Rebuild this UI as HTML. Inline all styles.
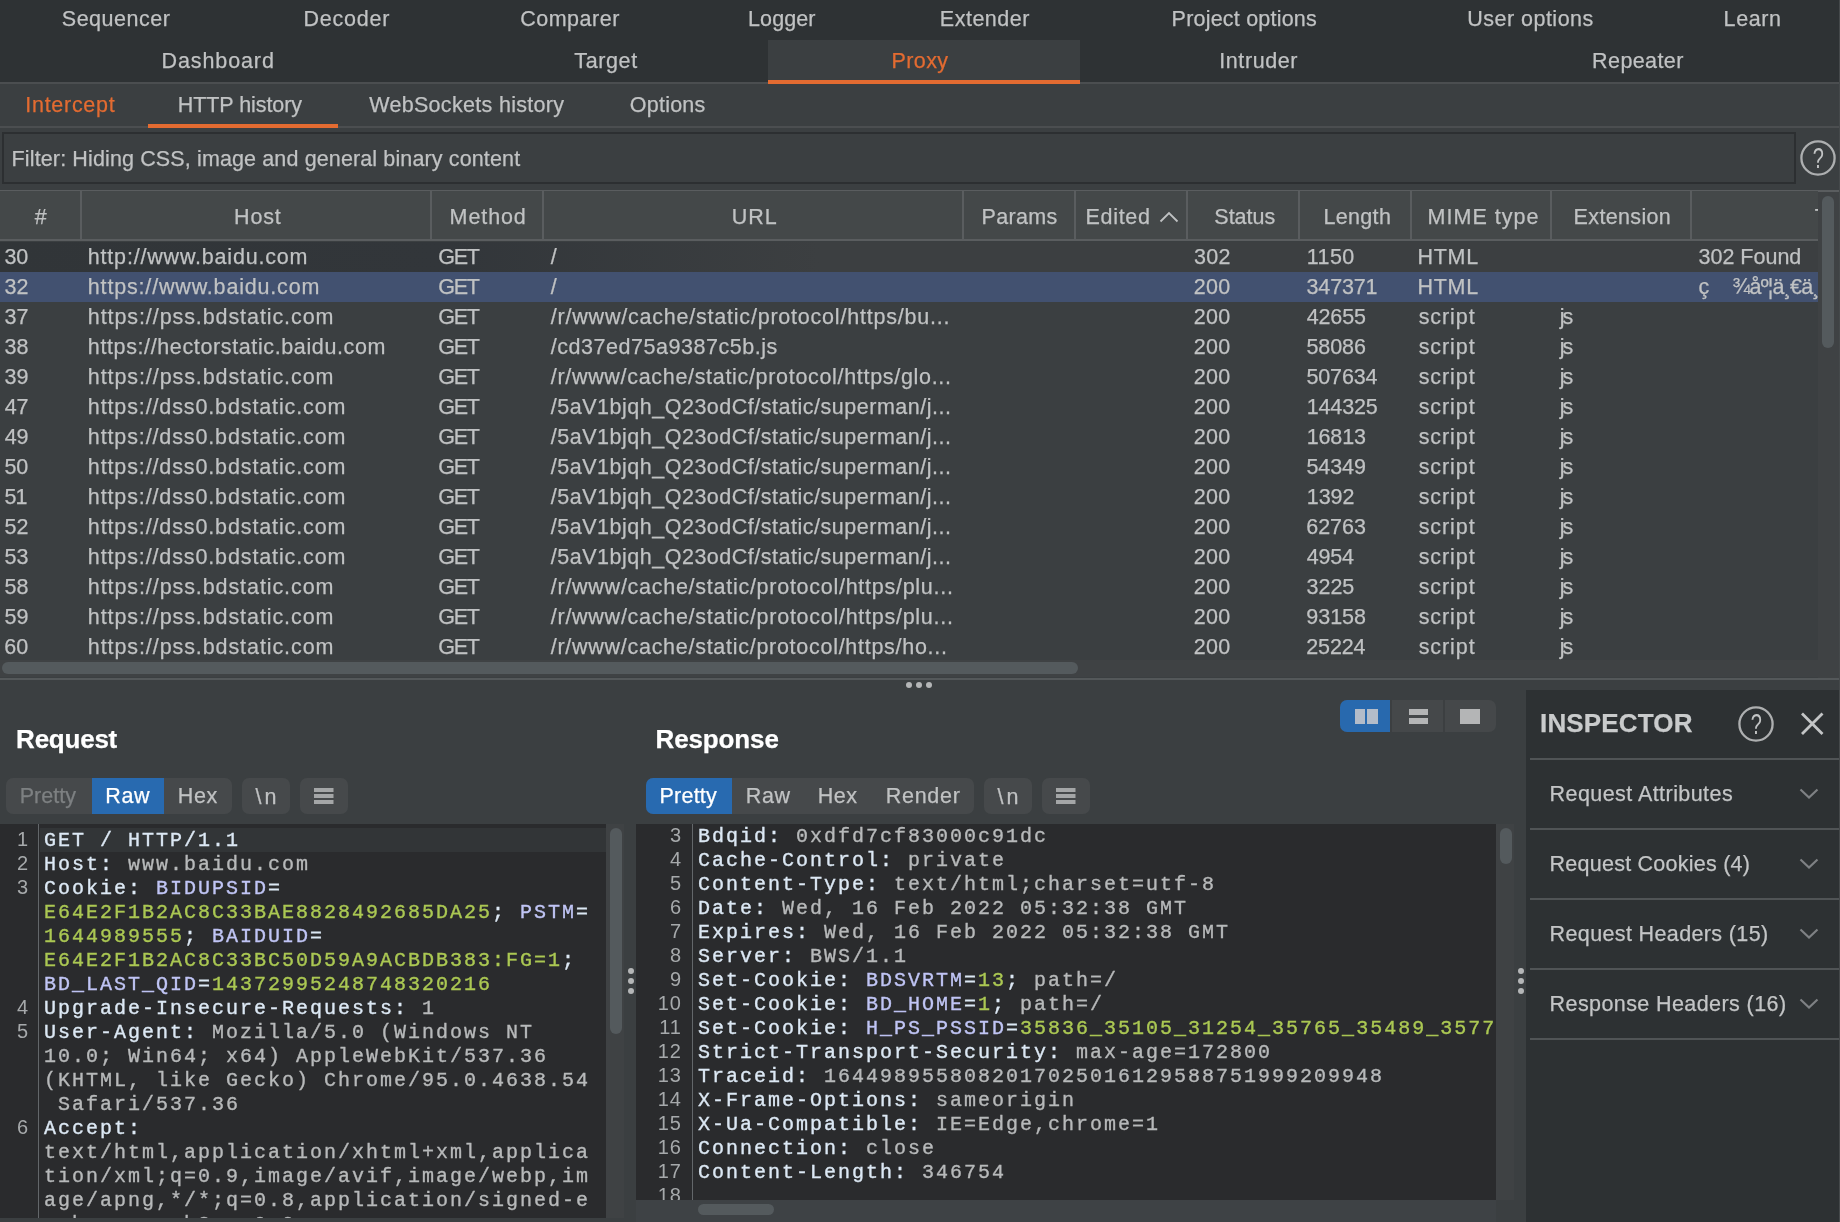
<!DOCTYPE html><html><head><meta charset="utf-8"><title>Burp Suite</title><style>
*{box-sizing:border-box;margin:0;padding:0}
html,body{width:1840px;height:1222px;overflow:hidden;background:#3b3f41}
body{font-family:"Liberation Sans",sans-serif;color:#bbbdbe;position:relative}
.abs{position:absolute}
.t{position:absolute;white-space:pre;line-height:1;color:#c0c2c3;-webkit-text-stroke:0.25px}
#top{left:0;top:0;width:1840px;height:82px;background:#2e3234}
#proxy{left:768px;top:40px;width:312px;height:44px;background:#3b3f41;border-bottom:4px solid #e36b31}
#filter{left:2px;top:132px;width:1794px;height:52px;border:2px solid #2c2f31;background:#3b3f41}
#thead{left:0;top:191px;width:1818px;height:50px;background:#444849;border-bottom:2px solid #5a5d5f;overflow:hidden}
.vl{position:absolute;top:0;width:2px;height:48px;background:#5a5d5f}
.row{position:absolute;left:0;width:1818px;height:30px;overflow:hidden}
.sel{background:#425170}
.mono{font-family:"Liberation Mono",monospace;font-size:20px;letter-spacing:2px;white-space:pre;line-height:24px;-webkit-text-stroke:0.35px}
.ed{position:absolute;background:#2a2b2d;overflow:hidden}
.ln{position:absolute;left:0;color:#a6a9ab;text-align:right;font-family:"Liberation Sans",sans-serif;font-size:20px;letter-spacing:1px;line-height:24px;white-space:pre}
.h{color:#dce8f4}
.v{color:#b7b9ba}
.n{color:#c0c5f5}
.g{color:#abc853}
.grp{position:absolute;top:778px;height:36px;background:#46494b;border-radius:7px;overflow:hidden}
.selb{position:absolute;top:0;height:36px;background:#286ab0}
.ins{position:absolute;left:1530px;width:310px;height:2px;background:#505456}
</style></head><body><div id="root" style="position:absolute;left:0;top:0;width:1840px;height:1222px;will-change:transform">
<div id="top" class="abs"></div>
<div id="proxy" class="abs"></div>
<div class="t" style="left:61.80px;top:7px;font-size:21.5px;line-height:24px;letter-spacing:0.513px;">Sequencer</div>
<div class="t" style="left:303.60px;top:7px;font-size:21.5px;line-height:24px;letter-spacing:0.750px;">Decoder</div>
<div class="t" style="left:520.20px;top:7px;font-size:21.5px;line-height:24px;letter-spacing:0.514px;">Comparer</div>
<div class="t" style="left:748.10px;top:7px;font-size:21.5px;line-height:24px;letter-spacing:0.060px;">Logger</div>
<div class="t" style="left:939.85px;top:7px;font-size:21.5px;line-height:24px;letter-spacing:0.493px;">Extender</div>
<div class="t" style="left:1171.60px;top:7px;font-size:21.5px;line-height:24px;letter-spacing:0.207px;">Project options</div>
<div class="t" style="left:1467.20px;top:7px;font-size:21.5px;line-height:24px;letter-spacing:0.491px;">User options</div>
<div class="t" style="left:1723.60px;top:7px;font-size:21.5px;line-height:24px;letter-spacing:0.575px;">Learn</div>
<div class="t" style="left:161.60px;top:49px;font-size:21.5px;line-height:24px;letter-spacing:0.887px;">Dashboard</div>
<div class="t" style="left:574.30px;top:49px;font-size:21.5px;line-height:24px;letter-spacing:0.620px;">Target</div>
<div class="t" style="left:891.60px;top:49px;font-size:21.5px;line-height:24px;letter-spacing:0.375px;color:#e36b31;">Proxy</div>
<div class="t" style="left:1219.30px;top:49px;font-size:21.5px;line-height:24px;letter-spacing:0.571px;">Intruder</div>
<div class="t" style="left:1592.10px;top:49px;font-size:21.5px;line-height:24px;letter-spacing:0.400px;">Repeater</div>
<div class="abs" style="left:0;top:82px;width:768px;height:2px;background:#4b4e50"></div>
<div class="abs" style="left:1080px;top:82px;width:760px;height:2px;background:#4b4e50"></div>
<div class="abs" style="left:0;top:126px;width:1840px;height:2px;background:#4b4e50"></div>
<div class="abs" style="left:148px;top:124px;width:190px;height:4px;background:#e36b31"></div>
<div class="t" style="left:25.30px;top:93px;font-size:21.5px;line-height:24px;letter-spacing:0.713px;color:#e36b31;">Intercept</div>
<div class="t" style="left:177.80px;top:93px;font-size:21.5px;line-height:24px;letter-spacing:-0.073px;">HTTP history</div>
<div class="t" style="left:369.20px;top:93px;font-size:21.5px;line-height:24px;letter-spacing:0.312px;">WebSockets history</div>
<div class="t" style="left:629.80px;top:93px;font-size:21.5px;line-height:24px;letter-spacing:0.233px;">Options</div>
<div id="filter" class="abs"></div>
<div class="t" style="left:11.60px;top:147px;font-size:21.5px;line-height:24px;letter-spacing:0.129px;">Filter: Hiding CSS, image and general binary content</div>
<svg class="abs" style="left:1798px;top:138px" width="40" height="40" viewBox="0 0 40 40"><circle cx="20" cy="20" r="16.6" fill="none" stroke="#adafb0" stroke-width="2.3"/><text transform="translate(20.3,29.6) scale(0.74,1.12)" x="0" y="0" font-family="Liberation Sans, sans-serif" font-size="27" fill="#c2c4c5" text-anchor="middle">?</text></svg>
<div class="abs" style="left:0;top:190px;width:1840px;height:2px;background:#5a5d5f"></div>
<div id="thead" class="abs">
<div class="vl" style="left:80px"></div>
<div class="vl" style="left:430px"></div>
<div class="vl" style="left:542px"></div>
<div class="vl" style="left:962px"></div>
<div class="vl" style="left:1074px"></div>
<div class="vl" style="left:1186px"></div>
<div class="vl" style="left:1298px"></div>
<div class="vl" style="left:1410px"></div>
<div class="vl" style="left:1550px"></div>
<div class="vl" style="left:1690px"></div>
<div class="t" style="left:34.70px;top:14px;font-size:21.5px;line-height:24px;">#</div>
<div class="t" style="left:234.10px;top:14px;font-size:21.5px;line-height:24px;letter-spacing:0.800px;">Host</div>
<div class="t" style="left:449.60px;top:14px;font-size:21.5px;line-height:24px;letter-spacing:0.900px;">Method</div>
<div class="t" style="left:731.70px;top:14px;font-size:21.5px;line-height:24px;letter-spacing:0.950px;">URL</div>
<div class="t" style="left:981.60px;top:14px;font-size:21.5px;line-height:24px;letter-spacing:0.320px;">Params</div>
<div class="t" style="left:1085.60px;top:14px;font-size:21.5px;line-height:24px;letter-spacing:0.660px;">Edited</div>
<div class="t" style="left:1214.30px;top:14px;font-size:21.5px;line-height:24px;">Status</div>
<div class="t" style="left:1323.60px;top:14px;font-size:21.5px;line-height:24px;letter-spacing:0.300px;">Length</div>
<div class="t" style="left:1427.60px;top:14px;font-size:21.5px;line-height:24px;letter-spacing:1.013px;">MIME type</div>
<div class="t" style="left:1573.60px;top:14px;font-size:21.5px;line-height:24px;letter-spacing:0.350px;">Extension</div>
<div class="t" style="left:1814.80px;top:14px;font-size:21.5px;line-height:24px;">Title</div>
<svg style="position:absolute;left:1159px;top:20px" width="20" height="12" viewBox="0 0 20 12"><path d="M1.5 10.5 L10 2 L18.5 10.5" fill="none" stroke="#bfc1c2" stroke-width="1.8"/></svg>
</div>
<div class="row" style="top:242px;background:linear-gradient(to right,#313538 0,#32363a 450px,#3c3f41 820px)"><div class="t" style="left:4.50px;top:3px;font-size:21.5px;line-height:24px;letter-spacing:-0.100px;">30</div><div class="t" style="left:87.80px;top:3px;font-size:21.5px;line-height:24px;letter-spacing:0.805px;">http://www.baidu.com</div><div class="t" style="left:438.20px;top:3px;font-size:21.5px;line-height:24px;letter-spacing:-1.250px;">GET</div><div class="t" style="left:550.80px;top:3px;font-size:21.5px;line-height:24px;">/</div><div class="t" style="left:1194.00px;top:3px;font-size:21.5px;line-height:24px;letter-spacing:0.250px;">302</div><div class="t" style="left:1306.70px;top:3px;font-size:21.5px;line-height:24px;letter-spacing:0.467px;">1150</div><div class="t" style="left:1417.60px;top:3px;font-size:21.5px;line-height:24px;letter-spacing:0.667px;">HTML</div><div class="t" style="left:1698.50px;top:3px;font-size:21.5px;line-height:24px;">302 Found</div></div>
<div class="row sel" style="top:272px"><div class="t" style="left:4.50px;top:3px;font-size:21.5px;line-height:24px;letter-spacing:0.100px;">32</div><div class="t" style="left:87.80px;top:3px;font-size:21.5px;line-height:24px;letter-spacing:0.825px;">https://www.baidu.com</div><div class="t" style="left:438.20px;top:3px;font-size:21.5px;line-height:24px;letter-spacing:-1.250px;">GET</div><div class="t" style="left:550.80px;top:3px;font-size:21.5px;line-height:24px;">/</div><div class="t" style="left:1193.70px;top:3px;font-size:21.5px;line-height:24px;letter-spacing:0.300px;">200</div><div class="t" style="left:1306.50px;top:3px;font-size:21.5px;line-height:24px;letter-spacing:-0.140px;">347371</div><div class="t" style="left:1417.60px;top:3px;font-size:21.5px;line-height:24px;letter-spacing:0.667px;">HTML</div><div class="t" style="left:1698.40px;top:3px;font-size:21.5px;line-height:24px;">ç</div><div class="t" style="left:1732.50px;top:3px;font-size:21.5px;line-height:24px;letter-spacing:-0.812px;">¾åº¦ä¸€ä¸</div></div>
<div class="row" style="top:302px"><div class="t" style="left:4.50px;top:3px;font-size:21.5px;line-height:24px;letter-spacing:0.100px;">37</div><div class="t" style="left:87.80px;top:3px;font-size:21.5px;line-height:24px;letter-spacing:0.913px;">https://pss.bdstatic.com</div><div class="t" style="left:438.20px;top:3px;font-size:21.5px;line-height:24px;letter-spacing:-1.250px;">GET</div><div class="t" style="left:550.80px;top:3px;font-size:21.5px;line-height:24px;letter-spacing:0.785px;">/r/www/cache/static/protocol/https/bu...</div><div class="t" style="left:1193.70px;top:3px;font-size:21.5px;line-height:24px;letter-spacing:0.300px;">200</div><div class="t" style="left:1306.80px;top:3px;font-size:21.5px;line-height:24px;letter-spacing:-0.175px;">42655</div><div class="t" style="left:1418.70px;top:3px;font-size:21.5px;line-height:24px;letter-spacing:0.920px;">script</div><div class="t" style="left:1559.80px;top:3px;font-size:21.5px;line-height:24px;letter-spacing:-2.100px;">js</div></div>
<div class="row" style="top:332px"><div class="t" style="left:4.50px;top:3px;font-size:21.5px;line-height:24px;">38</div><div class="t" style="left:87.80px;top:3px;font-size:21.5px;line-height:24px;letter-spacing:0.621px;">https://hectorstatic.baidu.com</div><div class="t" style="left:438.20px;top:3px;font-size:21.5px;line-height:24px;letter-spacing:-1.250px;">GET</div><div class="t" style="left:550.80px;top:3px;font-size:21.5px;line-height:24px;letter-spacing:0.532px;">/cd37ed75a9387c5b.js</div><div class="t" style="left:1193.70px;top:3px;font-size:21.5px;line-height:24px;letter-spacing:0.300px;">200</div><div class="t" style="left:1306.40px;top:3px;font-size:21.5px;line-height:24px;letter-spacing:-0.050px;">58086</div><div class="t" style="left:1418.70px;top:3px;font-size:21.5px;line-height:24px;letter-spacing:0.920px;">script</div><div class="t" style="left:1559.80px;top:3px;font-size:21.5px;line-height:24px;letter-spacing:-2.100px;">js</div></div>
<div class="row" style="top:362px"><div class="t" style="left:4.50px;top:3px;font-size:21.5px;line-height:24px;">39</div><div class="t" style="left:87.80px;top:3px;font-size:21.5px;line-height:24px;letter-spacing:0.913px;">https://pss.bdstatic.com</div><div class="t" style="left:438.20px;top:3px;font-size:21.5px;line-height:24px;letter-spacing:-1.250px;">GET</div><div class="t" style="left:550.80px;top:3px;font-size:21.5px;line-height:24px;letter-spacing:0.683px;">/r/www/cache/static/protocol/https/glo...</div><div class="t" style="left:1193.70px;top:3px;font-size:21.5px;line-height:24px;letter-spacing:0.300px;">200</div><div class="t" style="left:1306.40px;top:3px;font-size:21.5px;line-height:24px;letter-spacing:-0.120px;">507634</div><div class="t" style="left:1418.70px;top:3px;font-size:21.5px;line-height:24px;letter-spacing:0.920px;">script</div><div class="t" style="left:1559.80px;top:3px;font-size:21.5px;line-height:24px;letter-spacing:-2.100px;">js</div></div>
<div class="row" style="top:392px"><div class="t" style="left:4.80px;top:3px;font-size:21.5px;line-height:24px;letter-spacing:-0.200px;">47</div><div class="t" style="left:87.80px;top:3px;font-size:21.5px;line-height:24px;letter-spacing:0.875px;">https://dss0.bdstatic.com</div><div class="t" style="left:438.20px;top:3px;font-size:21.5px;line-height:24px;letter-spacing:-1.250px;">GET</div><div class="t" style="left:550.80px;top:3px;font-size:21.5px;line-height:24px;letter-spacing:0.511px;">/5aV1bjqh_Q23odCf/static/superman/j...</div><div class="t" style="left:1193.70px;top:3px;font-size:21.5px;line-height:24px;letter-spacing:0.300px;">200</div><div class="t" style="left:1306.70px;top:3px;font-size:21.5px;line-height:24px;letter-spacing:-0.120px;">144325</div><div class="t" style="left:1418.70px;top:3px;font-size:21.5px;line-height:24px;letter-spacing:0.920px;">script</div><div class="t" style="left:1559.80px;top:3px;font-size:21.5px;line-height:24px;letter-spacing:-2.100px;">js</div></div>
<div class="row" style="top:422px"><div class="t" style="left:4.80px;top:3px;font-size:21.5px;line-height:24px;letter-spacing:-0.300px;">49</div><div class="t" style="left:87.80px;top:3px;font-size:21.5px;line-height:24px;letter-spacing:0.875px;">https://dss0.bdstatic.com</div><div class="t" style="left:438.20px;top:3px;font-size:21.5px;line-height:24px;letter-spacing:-1.250px;">GET</div><div class="t" style="left:550.80px;top:3px;font-size:21.5px;line-height:24px;letter-spacing:0.511px;">/5aV1bjqh_Q23odCf/static/superman/j...</div><div class="t" style="left:1193.70px;top:3px;font-size:21.5px;line-height:24px;letter-spacing:0.300px;">200</div><div class="t" style="left:1306.70px;top:3px;font-size:21.5px;line-height:24px;letter-spacing:-0.125px;">16813</div><div class="t" style="left:1418.70px;top:3px;font-size:21.5px;line-height:24px;letter-spacing:0.920px;">script</div><div class="t" style="left:1559.80px;top:3px;font-size:21.5px;line-height:24px;letter-spacing:-2.100px;">js</div></div>
<div class="row" style="top:452px"><div class="t" style="left:4.40px;top:3px;font-size:21.5px;line-height:24px;">50</div><div class="t" style="left:87.80px;top:3px;font-size:21.5px;line-height:24px;letter-spacing:0.875px;">https://dss0.bdstatic.com</div><div class="t" style="left:438.20px;top:3px;font-size:21.5px;line-height:24px;letter-spacing:-1.250px;">GET</div><div class="t" style="left:550.80px;top:3px;font-size:21.5px;line-height:24px;letter-spacing:0.511px;">/5aV1bjqh_Q23odCf/static/superman/j...</div><div class="t" style="left:1193.70px;top:3px;font-size:21.5px;line-height:24px;letter-spacing:0.300px;">200</div><div class="t" style="left:1306.40px;top:3px;font-size:21.5px;line-height:24px;letter-spacing:-0.050px;">54349</div><div class="t" style="left:1418.70px;top:3px;font-size:21.5px;line-height:24px;letter-spacing:0.920px;">script</div><div class="t" style="left:1559.80px;top:3px;font-size:21.5px;line-height:24px;letter-spacing:-2.100px;">js</div></div>
<div class="row" style="top:482px"><div class="t" style="left:4.40px;top:3px;font-size:21.5px;line-height:24px;letter-spacing:-0.800px;">51</div><div class="t" style="left:87.80px;top:3px;font-size:21.5px;line-height:24px;letter-spacing:0.875px;">https://dss0.bdstatic.com</div><div class="t" style="left:438.20px;top:3px;font-size:21.5px;line-height:24px;letter-spacing:-1.250px;">GET</div><div class="t" style="left:550.80px;top:3px;font-size:21.5px;line-height:24px;letter-spacing:0.511px;">/5aV1bjqh_Q23odCf/static/superman/j...</div><div class="t" style="left:1193.70px;top:3px;font-size:21.5px;line-height:24px;letter-spacing:0.300px;">200</div><div class="t" style="left:1306.70px;top:3px;font-size:21.5px;line-height:24px;">1392</div><div class="t" style="left:1418.70px;top:3px;font-size:21.5px;line-height:24px;letter-spacing:0.920px;">script</div><div class="t" style="left:1559.80px;top:3px;font-size:21.5px;line-height:24px;letter-spacing:-2.100px;">js</div></div>
<div class="row" style="top:512px"><div class="t" style="left:4.40px;top:3px;font-size:21.5px;line-height:24px;letter-spacing:0.200px;">52</div><div class="t" style="left:87.80px;top:3px;font-size:21.5px;line-height:24px;letter-spacing:0.875px;">https://dss0.bdstatic.com</div><div class="t" style="left:438.20px;top:3px;font-size:21.5px;line-height:24px;letter-spacing:-1.250px;">GET</div><div class="t" style="left:550.80px;top:3px;font-size:21.5px;line-height:24px;letter-spacing:0.511px;">/5aV1bjqh_Q23odCf/static/superman/j...</div><div class="t" style="left:1193.70px;top:3px;font-size:21.5px;line-height:24px;letter-spacing:0.300px;">200</div><div class="t" style="left:1306.20px;top:3px;font-size:21.5px;line-height:24px;">62763</div><div class="t" style="left:1418.70px;top:3px;font-size:21.5px;line-height:24px;letter-spacing:0.920px;">script</div><div class="t" style="left:1559.80px;top:3px;font-size:21.5px;line-height:24px;letter-spacing:-2.100px;">js</div></div>
<div class="row" style="top:542px"><div class="t" style="left:4.40px;top:3px;font-size:21.5px;line-height:24px;letter-spacing:0.100px;">53</div><div class="t" style="left:87.80px;top:3px;font-size:21.5px;line-height:24px;letter-spacing:0.875px;">https://dss0.bdstatic.com</div><div class="t" style="left:438.20px;top:3px;font-size:21.5px;line-height:24px;letter-spacing:-1.250px;">GET</div><div class="t" style="left:550.80px;top:3px;font-size:21.5px;line-height:24px;letter-spacing:0.511px;">/5aV1bjqh_Q23odCf/static/superman/j...</div><div class="t" style="left:1193.70px;top:3px;font-size:21.5px;line-height:24px;letter-spacing:0.300px;">200</div><div class="t" style="left:1306.80px;top:3px;font-size:21.5px;line-height:24px;letter-spacing:-0.200px;">4954</div><div class="t" style="left:1418.70px;top:3px;font-size:21.5px;line-height:24px;letter-spacing:0.920px;">script</div><div class="t" style="left:1559.80px;top:3px;font-size:21.5px;line-height:24px;letter-spacing:-2.100px;">js</div></div>
<div class="row" style="top:572px"><div class="t" style="left:4.40px;top:3px;font-size:21.5px;line-height:24px;letter-spacing:0.100px;">58</div><div class="t" style="left:87.80px;top:3px;font-size:21.5px;line-height:24px;letter-spacing:0.913px;">https://pss.bdstatic.com</div><div class="t" style="left:438.20px;top:3px;font-size:21.5px;line-height:24px;letter-spacing:-1.250px;">GET</div><div class="t" style="left:550.80px;top:3px;font-size:21.5px;line-height:24px;letter-spacing:0.733px;">/r/www/cache/static/protocol/https/plu...</div><div class="t" style="left:1193.70px;top:3px;font-size:21.5px;line-height:24px;letter-spacing:0.300px;">200</div><div class="t" style="left:1306.50px;top:3px;font-size:21.5px;line-height:24px;">3225</div><div class="t" style="left:1418.70px;top:3px;font-size:21.5px;line-height:24px;letter-spacing:0.920px;">script</div><div class="t" style="left:1559.80px;top:3px;font-size:21.5px;line-height:24px;letter-spacing:-2.100px;">js</div></div>
<div class="row" style="top:602px"><div class="t" style="left:4.40px;top:3px;font-size:21.5px;line-height:24px;letter-spacing:0.100px;">59</div><div class="t" style="left:87.80px;top:3px;font-size:21.5px;line-height:24px;letter-spacing:0.913px;">https://pss.bdstatic.com</div><div class="t" style="left:438.20px;top:3px;font-size:21.5px;line-height:24px;letter-spacing:-1.250px;">GET</div><div class="t" style="left:550.80px;top:3px;font-size:21.5px;line-height:24px;letter-spacing:0.733px;">/r/www/cache/static/protocol/https/plu...</div><div class="t" style="left:1193.70px;top:3px;font-size:21.5px;line-height:24px;letter-spacing:0.300px;">200</div><div class="t" style="left:1306.30px;top:3px;font-size:21.5px;line-height:24px;letter-spacing:-0.025px;">93158</div><div class="t" style="left:1418.70px;top:3px;font-size:21.5px;line-height:24px;letter-spacing:0.920px;">script</div><div class="t" style="left:1559.80px;top:3px;font-size:21.5px;line-height:24px;letter-spacing:-2.100px;">js</div></div>
<div class="row" style="top:632px"><div class="t" style="left:4.20px;top:3px;font-size:21.5px;line-height:24px;letter-spacing:0.200px;">60</div><div class="t" style="left:87.80px;top:3px;font-size:21.5px;line-height:24px;letter-spacing:0.913px;">https://pss.bdstatic.com</div><div class="t" style="left:438.20px;top:3px;font-size:21.5px;line-height:24px;letter-spacing:-1.250px;">GET</div><div class="t" style="left:550.80px;top:3px;font-size:21.5px;line-height:24px;letter-spacing:0.721px;">/r/www/cache/static/protocol/https/ho...</div><div class="t" style="left:1193.70px;top:3px;font-size:21.5px;line-height:24px;letter-spacing:0.300px;">200</div><div class="t" style="left:1306.20px;top:3px;font-size:21.5px;line-height:24px;letter-spacing:-0.100px;">25224</div><div class="t" style="left:1418.70px;top:3px;font-size:21.5px;line-height:24px;letter-spacing:0.920px;">script</div><div class="t" style="left:1559.80px;top:3px;font-size:21.5px;line-height:24px;letter-spacing:-2.100px;">js</div></div>
<div class="abs" style="left:1818px;top:192px;width:22px;height:486px;background:#3f4244"></div>
<div class="abs" style="left:1822px;top:196px;width:12px;height:152px;border-radius:6px;background:#545a5d"></div>
<div class="abs" style="left:0;top:660px;width:1818px;height:17px;background:#3f4244"></div>
<div class="abs" style="left:2px;top:662px;width:1076px;height:12px;border-radius:6px;background:#545a5d"></div>
<div class="abs" style="left:0;top:678px;width:1840px;height:2px;background:#54585a"></div>
<div class="abs" style="left:906px;top:682px;width:6px;height:6px;border-radius:50%;background:#b4b6b7"></div>
<div class="abs" style="left:916px;top:682px;width:6px;height:6px;border-radius:50%;background:#b4b6b7"></div>
<div class="abs" style="left:926px;top:682px;width:6px;height:6px;border-radius:50%;background:#b4b6b7"></div>
<div class="t" style="left:16.10px;top:724px;font-size:26px;line-height:30px;letter-spacing:-0.233px;color:#fff;font-weight:bold;">Request</div>
<div class="grp" style="left:6px;width:226px"><div class="selb" style="left:86px;width:72px"></div></div>
<div class="t" style="left:19.70px;top:784px;font-size:21.5px;line-height:24px;letter-spacing:0.040px;color:#7d8082;">Pretty</div>
<div class="t" style="left:105.30px;top:784px;font-size:21.5px;line-height:24px;letter-spacing:0.600px;color:#fff;">Raw</div>
<div class="t" style="left:177.80px;top:784px;font-size:21.5px;line-height:24px;letter-spacing:0.600px;">Hex</div>
<div class="grp" style="left:242px;width:48px"></div>
<div class="t" style="left:255.50px;top:785px;font-size:21.5px;line-height:24px;letter-spacing:3.100px;">\n</div>
<div class="grp" style="left:300px;width:48px"><svg style="position:absolute;left:14.3px;top:10px" width="19.5" height="16" viewBox="0 0 19.5 16"><path d="M0 2H19.5M0 8H19.5M0 14H19.5" stroke="#a4a6a7" stroke-width="4"/></svg></div>
<div class="ed" style="left:0;top:824px;width:606px;height:394px">
<div class="abs" style="left:40px;top:4px;width:566px;height:24px;background:#323537"></div>
<div class="abs" style="left:38px;top:0;width:1px;height:394px;background:#63676a"></div>
<div class="ln" style="top:3px;width:29px">1
2
3




4
5



6



</div>
<div class="mono abs" style="left:44px;top:5px"><span class="h">GET / HTTP/1.1</span>
<span class="h">Host: </span><span class="v">www.baidu.com</span>
<span class="h">Cookie: </span><span class="n">BIDUPSID</span><span class="h">=</span>
<span class="g">E64E2F1B2AC8C33BAE8828492685DA25</span><span class="h">; </span><span class="n">PSTM</span><span class="h">=</span>
<span class="g">1644989555</span><span class="h">; </span><span class="n">BAIDUID</span><span class="h">=</span>
<span class="g">E64E2F1B2AC8C33BC50D59A9ACBDB383:FG=1</span><span class="h">;</span>
<span class="n">BD_LAST_QID</span><span class="h">=</span><span class="g">14372995248748320216</span>
<span class="h">Upgrade-Insecure-Requests: </span><span class="v">1</span>
<span class="h">User-Agent: </span><span class="v">Mozilla/5.0 (Windows NT</span>
<span class="v">10.0; Win64; x64) AppleWebKit/537.36</span>
<span class="v">(KHTML, like Gecko) Chrome/95.0.4638.54</span>
<span class="v"> Safari/537.36</span>
<span class="h">Accept:</span>
<span class="v">text/html,application/xhtml+xml,applica</span>
<span class="v">tion/xml;q=0.9,image/avif,image/webp,im</span>
<span class="v">age/apng,*/*;q=0.8,application/signed-e</span>
<span class="v">xchange;v=b3;q=0.9</span></div>
</div>
<div class="abs" style="left:606px;top:824px;width:18px;height:394px;background:#3f4244"></div>
<div class="abs" style="left:610px;top:828px;width:12px;height:206px;border-radius:6px;background:#545a5d"></div>
<div class="abs" style="left:628px;top:968px;width:6px;height:6px;border-radius:50%;background:#b4b6b7"></div>
<div class="abs" style="left:1518px;top:968px;width:6px;height:6px;border-radius:50%;background:#b4b6b7"></div>
<div class="abs" style="left:628px;top:978px;width:6px;height:6px;border-radius:50%;background:#b4b6b7"></div>
<div class="abs" style="left:1518px;top:978px;width:6px;height:6px;border-radius:50%;background:#b4b6b7"></div>
<div class="abs" style="left:628px;top:988px;width:6px;height:6px;border-radius:50%;background:#b4b6b7"></div>
<div class="abs" style="left:1518px;top:988px;width:6px;height:6px;border-radius:50%;background:#b4b6b7"></div>
<div class="t" style="left:655.60px;top:724px;font-size:26px;line-height:30px;letter-spacing:-0.143px;color:#fff;font-weight:bold;">Response</div>
<div class="grp" style="left:646px;width:328px"><div class="selb" style="left:0;width:86px"></div></div>
<div class="t" style="left:659.40px;top:784px;font-size:21.5px;line-height:24px;letter-spacing:0.260px;color:#fff;">Pretty</div>
<div class="t" style="left:745.80px;top:784px;font-size:21.5px;line-height:24px;letter-spacing:0.650px;">Raw</div>
<div class="t" style="left:817.85px;top:784px;font-size:21.5px;line-height:24px;letter-spacing:0.475px;">Hex</div>
<div class="t" style="left:885.80px;top:784px;font-size:21.5px;line-height:24px;letter-spacing:0.700px;">Render</div>
<div class="grp" style="left:984px;width:48px"></div>
<div class="t" style="left:997.50px;top:785px;font-size:21.5px;line-height:24px;letter-spacing:3.100px;">\n</div>
<div class="grp" style="left:1042px;width:48px"><svg style="position:absolute;left:14.3px;top:10px" width="19.5" height="16" viewBox="0 0 19.5 16"><path d="M0 2H19.5M0 8H19.5M0 14H19.5" stroke="#a4a6a7" stroke-width="4"/></svg></div>
<div class="abs" style="left:1340px;top:700px;width:156px;height:32px;border-radius:7px;background:#45484a;overflow:hidden"><div class="abs" style="left:0;top:0;width:50px;height:32px;background:#2869ae"></div><div class="abs" style="left:50px;top:0;width:2px;height:32px;background:#3c3f41"></div><div class="abs" style="left:103px;top:0;width:2px;height:32px;background:#3c3f41"></div><div class="abs" style="left:14.5px;top:8.5px;width:10.5px;height:15.5px;background:#b3bcc9"></div><div class="abs" style="left:27px;top:8.5px;width:10.5px;height:15.5px;background:#b3bcc9"></div><div class="abs" style="left:68.5px;top:8.5px;width:19.5px;height:6px;background:#b4b5b6"></div><div class="abs" style="left:68.5px;top:18px;width:19.5px;height:6px;background:#b4b5b6"></div><div class="abs" style="left:120.3px;top:8.5px;width:19.5px;height:15.5px;background:#b4b5b6"></div></div>
<div class="ed" style="left:636px;top:824px;width:860px;height:376px">
<div class="abs" style="left:56px;top:0;width:1px;height:376px;background:#63676a"></div>
<div class="ln" style="top:-1px;width:46px">3
4
5
6
7
8
9
10
11
12
13
14
15
16
17
18</div>
<div class="mono abs" style="left:62px;top:1px"><span class="h">Bdqid: </span><span class="v">0xdfd7cf83000c91dc</span>
<span class="h">Cache-Control: </span><span class="v">private</span>
<span class="h">Content-Type: </span><span class="v">text/html;charset=utf-8</span>
<span class="h">Date: </span><span class="v">Wed, 16 Feb 2022 05:32:38 GMT</span>
<span class="h">Expires: </span><span class="v">Wed, 16 Feb 2022 05:32:38 GMT</span>
<span class="h">Server: </span><span class="v">BWS/1.1</span>
<span class="h">Set-Cookie: </span><span class="n">BDSVRTM</span><span class="h">=</span><span class="g">13</span><span class="h">; </span><span class="v">path=/</span>
<span class="h">Set-Cookie: </span><span class="n">BD_HOME</span><span class="h">=</span><span class="g">1</span><span class="h">; </span><span class="v">path=/</span>
<span class="h">Set-Cookie: </span><span class="n">H_PS_PSSID</span><span class="h">=</span><span class="g">35836_35105_31254_35765_35489_35774_34584</span>
<span class="h">Strict-Transport-Security: </span><span class="v">max-age=172800</span>
<span class="h">Traceid: </span><span class="v">1644989558082017025016129588751999209948</span>
<span class="h">X-Frame-Options: </span><span class="v">sameorigin</span>
<span class="h">X-Ua-Compatible: </span><span class="v">IE=Edge,chrome=1</span>
<span class="h">Connection: </span><span class="v">close</span>
<span class="h">Content-Length: </span><span class="v">346754</span>
</div>
</div>
<div class="abs" style="left:1496px;top:824px;width:18px;height:376px;background:#3f4244"></div>
<div class="abs" style="left:1500px;top:828px;width:12px;height:36px;border-radius:6px;background:#545a5d"></div>
<div class="abs" style="left:636px;top:1200px;width:860px;height:22px;background:#3e4245"></div>
<div class="abs" style="left:698px;top:1204px;width:76px;height:11px;border-radius:5.5px;background:#545a5d"></div>
<div class="abs" style="left:1526px;top:690px;width:314px;height:532px;background:#2d3133"></div>
<div class="t" style="left:1540.10px;top:708px;font-size:26px;line-height:30px;letter-spacing:0.137px;color:#c9cbcc;font-weight:bold;">INSPECTOR</div>
<svg class="abs" style="left:1735.6px;top:704px" width="40" height="40" viewBox="0 0 40 40"><circle cx="20" cy="20" r="16.6" fill="none" stroke="#adafb0" stroke-width="2.3"/><text transform="translate(20.3,29.6) scale(0.74,1.12)" x="0" y="0" font-family="Liberation Sans, sans-serif" font-size="27" fill="#c2c4c5" text-anchor="middle">?</text></svg>
<svg class="abs" style="left:1800px;top:712px" width="24" height="24" viewBox="0 0 24 24"><path d="M2 1.5L22.5 22M22.5 1.5L2 22" stroke="#c3c5c6" stroke-width="2.8" fill="none"/></svg>
<div class="ins" style="top:758px"></div>
<div class="t" style="left:1549.60px;top:782px;font-size:21.5px;line-height:24px;letter-spacing:0.435px;color:#c3c5c6;">Request Attributes</div>
<svg class="abs" style="left:1799px;top:788px" width="20" height="12" viewBox="0 0 20 12"><path d="M1.5 1.5L10 9.5L18.5 1.5" fill="none" stroke="#7e8184" stroke-width="2.2"/></svg>
<div class="ins" style="top:828px"></div>
<div class="t" style="left:1549.60px;top:852px;font-size:21.5px;line-height:24px;letter-spacing:0.244px;color:#c3c5c6;">Request Cookies (4)</div>
<svg class="abs" style="left:1799px;top:858px" width="20" height="12" viewBox="0 0 20 12"><path d="M1.5 1.5L10 9.5L18.5 1.5" fill="none" stroke="#7e8184" stroke-width="2.2"/></svg>
<div class="ins" style="top:898px"></div>
<div class="t" style="left:1549.60px;top:922px;font-size:21.5px;line-height:24px;letter-spacing:0.368px;color:#c3c5c6;">Request Headers (15)</div>
<svg class="abs" style="left:1799px;top:928px" width="20" height="12" viewBox="0 0 20 12"><path d="M1.5 1.5L10 9.5L18.5 1.5" fill="none" stroke="#7e8184" stroke-width="2.2"/></svg>
<div class="ins" style="top:968px"></div>
<div class="t" style="left:1549.60px;top:992px;font-size:21.5px;line-height:24px;letter-spacing:0.410px;color:#c3c5c6;">Response Headers (16)</div>
<svg class="abs" style="left:1799px;top:998px" width="20" height="12" viewBox="0 0 20 12"><path d="M1.5 1.5L10 9.5L18.5 1.5" fill="none" stroke="#7e8184" stroke-width="2.2"/></svg>
<div class="ins" style="top:1038px"></div>
<div class="abs" style="left:1838.5px;top:0;width:1.5px;height:1222px;background:#45494b"></div>
</div></body></html>
